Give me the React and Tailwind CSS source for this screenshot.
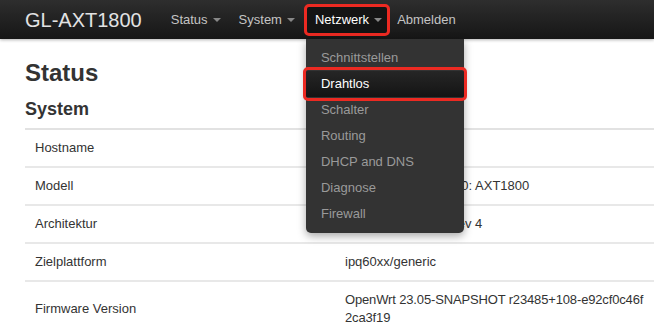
import React from "react";

const Caret = () => (
  <span className="ml-[5px] inline-block h-0 w-0 border-x-[4px] border-t-[4px] border-x-transparent border-t-[#888] align-middle" />
);

const rows = [
  ["Hostname", ""],
  ["Modell", "GL.iNet GL-AXT1800: AXT1800"],
  ["Architektur", "ARMv8 Processor rev 4"],
  ["Zielplattform", "ipq60xx/generic"],
  ["Firmware Version", "OpenWrt 23.05-SNAPSHOT r23485+108-e92cf0c46f2ca3f19"],
];

const items = ["Schnittstellen", "Drahtlos", "Schalter", "Routing", "DHCP and DNS", "Diagnose", "Firewall"];

export default function App() {
  return (
    <div className="relative h-[324px] w-[654px] overflow-hidden bg-white font-['Liberation_Sans',Arial,sans-serif] text-[#333]">
      <header className="flex h-[39px] items-center bg-gradient-to-b from-[#2e2e2e] to-[#161616] pl-[25px] shadow-[0_1px_3px_rgba(0,0,0,0.3)]">
        <div className="text-[20px] leading-none text-[#e2e2e2]">GL-AXT1800</div>
        <nav className="ml-[19px] flex h-full items-center text-[13px] text-[#c4c4c4]">
          <div className="flex items-center pl-[10px] pr-[10px]">Status<Caret /></div>
          <div className="flex items-center pl-[8px] pr-[9px]">System<Caret /></div>
          <div className="relative flex h-full items-center">
            <div className="flex h-[32px] items-center rounded-[5px] border-[3px] border-[#ec2a22] bg-[#141414] pl-[8px] pr-[5px] text-white">
              Netzwerk<Caret />
            </div>
            <div className="absolute left-[2px] top-[39px] z-10 w-[158px] rounded-b-[5px] bg-[#333333] py-[6px] shadow-[0_3px_8px_rgba(0,0,0,0.35)]">
              {items.map((it) =>
                it === "Drahtlos" ? (
                  <div key={it} className="relative flex h-[26px] items-center bg-gradient-to-b from-[#262626] to-[#141414] pl-[15px] text-[13px] text-white">
                    {it}
                    <div className="absolute -inset-x-[3px] -inset-y-[4px] rounded-[5px] border-[3px] border-[#ec2a22]" />
                  </div>
                ) : (
                  <div key={it} className="flex h-[26px] items-center pl-[15px] text-[13px] text-[#9a9a9a]">{it}</div>
                )
              )}
            </div>
          </div>
          <div className="flex items-center pl-[7px]">Abmelden</div>
        </nav>
      </header>
      <main className="pl-[25px]">
        <h2 className="mt-[20px] text-[24px] font-bold leading-[28px]">Status</h2>
        <h3 className="mt-[11px] text-[18px] font-bold leading-[22px]">System</h3>
        <div className="mt-[8px] border-t-2 border-[#e2e2e2]">
          {rows.map(([k, v]) => (
            <div key={k} className="flex border-b-2 border-[#e8e8e8] text-[13px] leading-[18px]">
              <div className="flex w-[320px] shrink-0 items-center py-[9px] pl-[10px]">{k}</div>
              <div className={`w-[300px] break-all py-[9px] ${k === "Firmware Version" ? "tracking-[-0.15px]" : ""}`}>{v}</div>
            </div>
          ))}
        </div>
      </main>
    </div>
  );
}
